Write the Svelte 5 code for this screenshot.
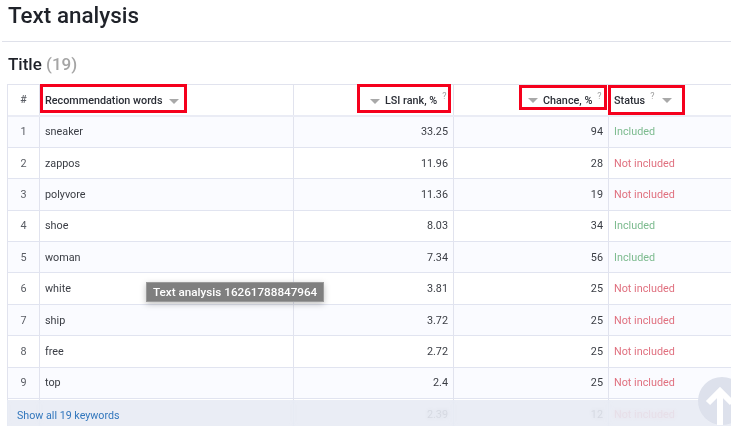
<script>
  const rows = [
    { word: 'sneaker', rank: '33.25', chance: 94, ok: true },
    { word: 'zappos', rank: '11.96', chance: 28, ok: false },
    { word: 'polyvore', rank: '11.36', chance: 19, ok: false },
    { word: 'shoe', rank: '8.03', chance: 34, ok: true },
    { word: 'woman', rank: '7.34', chance: 56, ok: true },
    { word: 'white', rank: '3.81', chance: 25, ok: false },
    { word: 'ship', rank: '3.72', chance: 25, ok: false },
    { word: 'free', rank: '2.72', chance: 25, ok: false },
    { word: 'top', rank: '2.4', chance: 25, ok: false },
    { word: '', rank: '2.39', chance: 12, ok: false }
  ];
</script>

<div class="page">
  <h1>Text analysis</h1>
  <hr />
  <h2>Title <span class="count">(19)</span></h2>

  <div class="table-wrap">
    <div class="row head">
      <div class="cell num">#</div>
      <div class="cell">
        <span class="mark mark-words">Recommendation words<i class="arrow"></i></span>
      </div>
      <div class="cell right">
        <span class="mark mark-rank"><i class="arrow"></i>LSI rank, %<sup>?</sup></span>
      </div>
      <div class="cell right">
        <span class="mark mark-chance"><i class="arrow"></i>Chance, %<sup>?</sup></span>
      </div>
      <div class="cell status">
        <span class="mark mark-status">Status<sup>?</sup><i class="arrow"></i></span>
      </div>
    </div>

    {#each rows as r, i}
      <div class="row" class:odd={i % 2 === 0}>
        <div class="cell num">{r.word ? i + 1 : ''}</div>
        <div class="cell">{r.word}</div>
        <div class="cell right">{r.rank}</div>
        <div class="cell right">{r.chance}</div>
        <div class="cell status" class:yes={r.ok} class:no={!r.ok}>{r.ok ? 'Included' : 'Not included'}</div>
      </div>
    {/each}

    <div class="more"><span>Show all 19 keywords</span></div>
    <div class="tip">Text analysis 16261788847964</div>
    <div class="up">
      <svg viewBox="0 0 34 40" width="34" height="40">
        <path d="M17 6V40M5 18L17 6L29 18" fill="none" stroke="#fff" stroke-width="6" />
      </svg>
    </div>
  </div>
</div>

<style>
  :global(body) {
    margin: 0;
    background: #fff;
  }

  .page {
    width: 731px;
    height: 426px;
    overflow: hidden;
    font-family: Roboto, "Liberation Sans", sans-serif;
    color: #3a3d44;
    font-size: 10.8px;
    filter: blur(0.3px);
  }

  h1 {
    margin: 0;
    padding: 2px 0 0 8px;
    height: 29px;
    font-size: 22.4px;
    line-height: 27px;
    font-weight: 500;
    color: #1f2229;
  }

  hr {
    margin: 10px 0 0 2px;
    border: 0;
    border-top: 1px solid #dfe1ea;
  }

  h2 {
    margin: 0;
    padding: 11px 0 0 8px;
    height: 42px;
    font-size: 17px;
    line-height: 22px;
    font-weight: 500;
    color: #1f2229;
    box-sizing: border-box;
  }

  .count {
    color: #a5a5a5;
  }

  .table-wrap {
    position: relative;
    margin: 0 0 0 7px;
    border-top: 1px solid #e1e3ee;
    border-left: 1px solid #e1e3ee;
  }

  .row {
    display: grid;
    grid-template-columns: 32px 254px 160px 155px 123px;
    height: 31.4px;
    box-sizing: border-box;
    border-bottom: 1px solid #e1e4f0;
  }

  .row.head {
    height: 31.5px;
    border-bottom-width: 2px;
    font-weight: 500;
    color: #2b2e36;
    border-bottom-color: #eaecf5;
  }

  .odd {
    background: #fafbff;
  }

  .cell {
    display: flex;
    align-items: center;
    padding: 0 5px;
    border-right: 1px solid #e1e3ee;
    position: relative;
    white-space: nowrap;
    min-width: 0;
  }

  .num {
    justify-content: center;
    padding: 0;
    color: #5a5d64;
  }

  .right {
    justify-content: flex-end;
  }

  .status {
    border-right: 0;
  }

  .yes {
    color: #7dbb8f;
  }

  .no {
    color: #e0707f;
  }

  .mark {
    position: absolute;
    display: inline-flex;
    align-items: center;
    box-sizing: border-box;
    outline: 3px solid #f5001c;
    outline-offset: -3px;
  }

  .mark-words {
    left: 0;
    top: -1px;
    width: 147px;
    height: 29px;
    padding: 4px 0 0 5px;
  }

  .mark-words .arrow {
    margin-left: 6px;
  }

  .mark-rank {
    left: 63px;
    top: -1px;
    width: 94px;
    height: 29px;
    padding: 4px 0 0 13px;
  }

  .mark-chance {
    left: 65px;
    top: 0;
    width: 88px;
    height: 25px;
    padding: 5px 0 0 9px;
  }

  .mark-status {
    left: -1px;
    top: 0;
    width: 77px;
    height: 30px;
    padding-left: 6px;
  }

  .mark-status .arrow {
    margin-left: 8px;
  }

  .arrow {
    display: inline-block;
    flex: none;
    width: 0;
    height: 0;
    margin: 1px 5px 0 0;
    border-left: 5px solid transparent;
    border-right: 5px solid transparent;
    border-top: 5px solid #a9a9a9;
  }

  sup {
    font-size: 9px;
    line-height: 1;
    color: #a0a0a0;
    margin: -8px 0 0 5px;
    font-weight: 400;
  }

  .more {
    position: absolute;
    left: -1px;
    right: 0;
    top: 315px;
    height: 27px;
    padding-left: 10px;
    line-height: 32px;
    font-size: 10.7px;
    color: #3277bd;
    background: rgba(232, 235, 244, 0.9);
    backdrop-filter: blur(2.5px);
  }

  .tip {
    position: absolute;
    left: 138px;
    top: 197px;
    padding: 0 6px;
    height: 20px;
    line-height: 19px;
    box-sizing: border-box;
    background: #7f7f7f;
    border: 1px solid #9a9a9a;
    color: #fff;
    font-size: 11.7px;
    font-weight: 500;
    white-space: nowrap;
    box-shadow: 0 2px 6px rgba(0, 0, 0, 0.25);
  }

  .up {
    position: absolute;
    left: 690px;
    top: 292px;
    width: 48px;
    height: 48px;
    border-radius: 50%;
    background: #dde1ec;
    display: flex;
    justify-content: center;
    align-items: flex-end;
  }

  .up svg {
    display: block;
    margin-left: -4px;
  }
</style>
